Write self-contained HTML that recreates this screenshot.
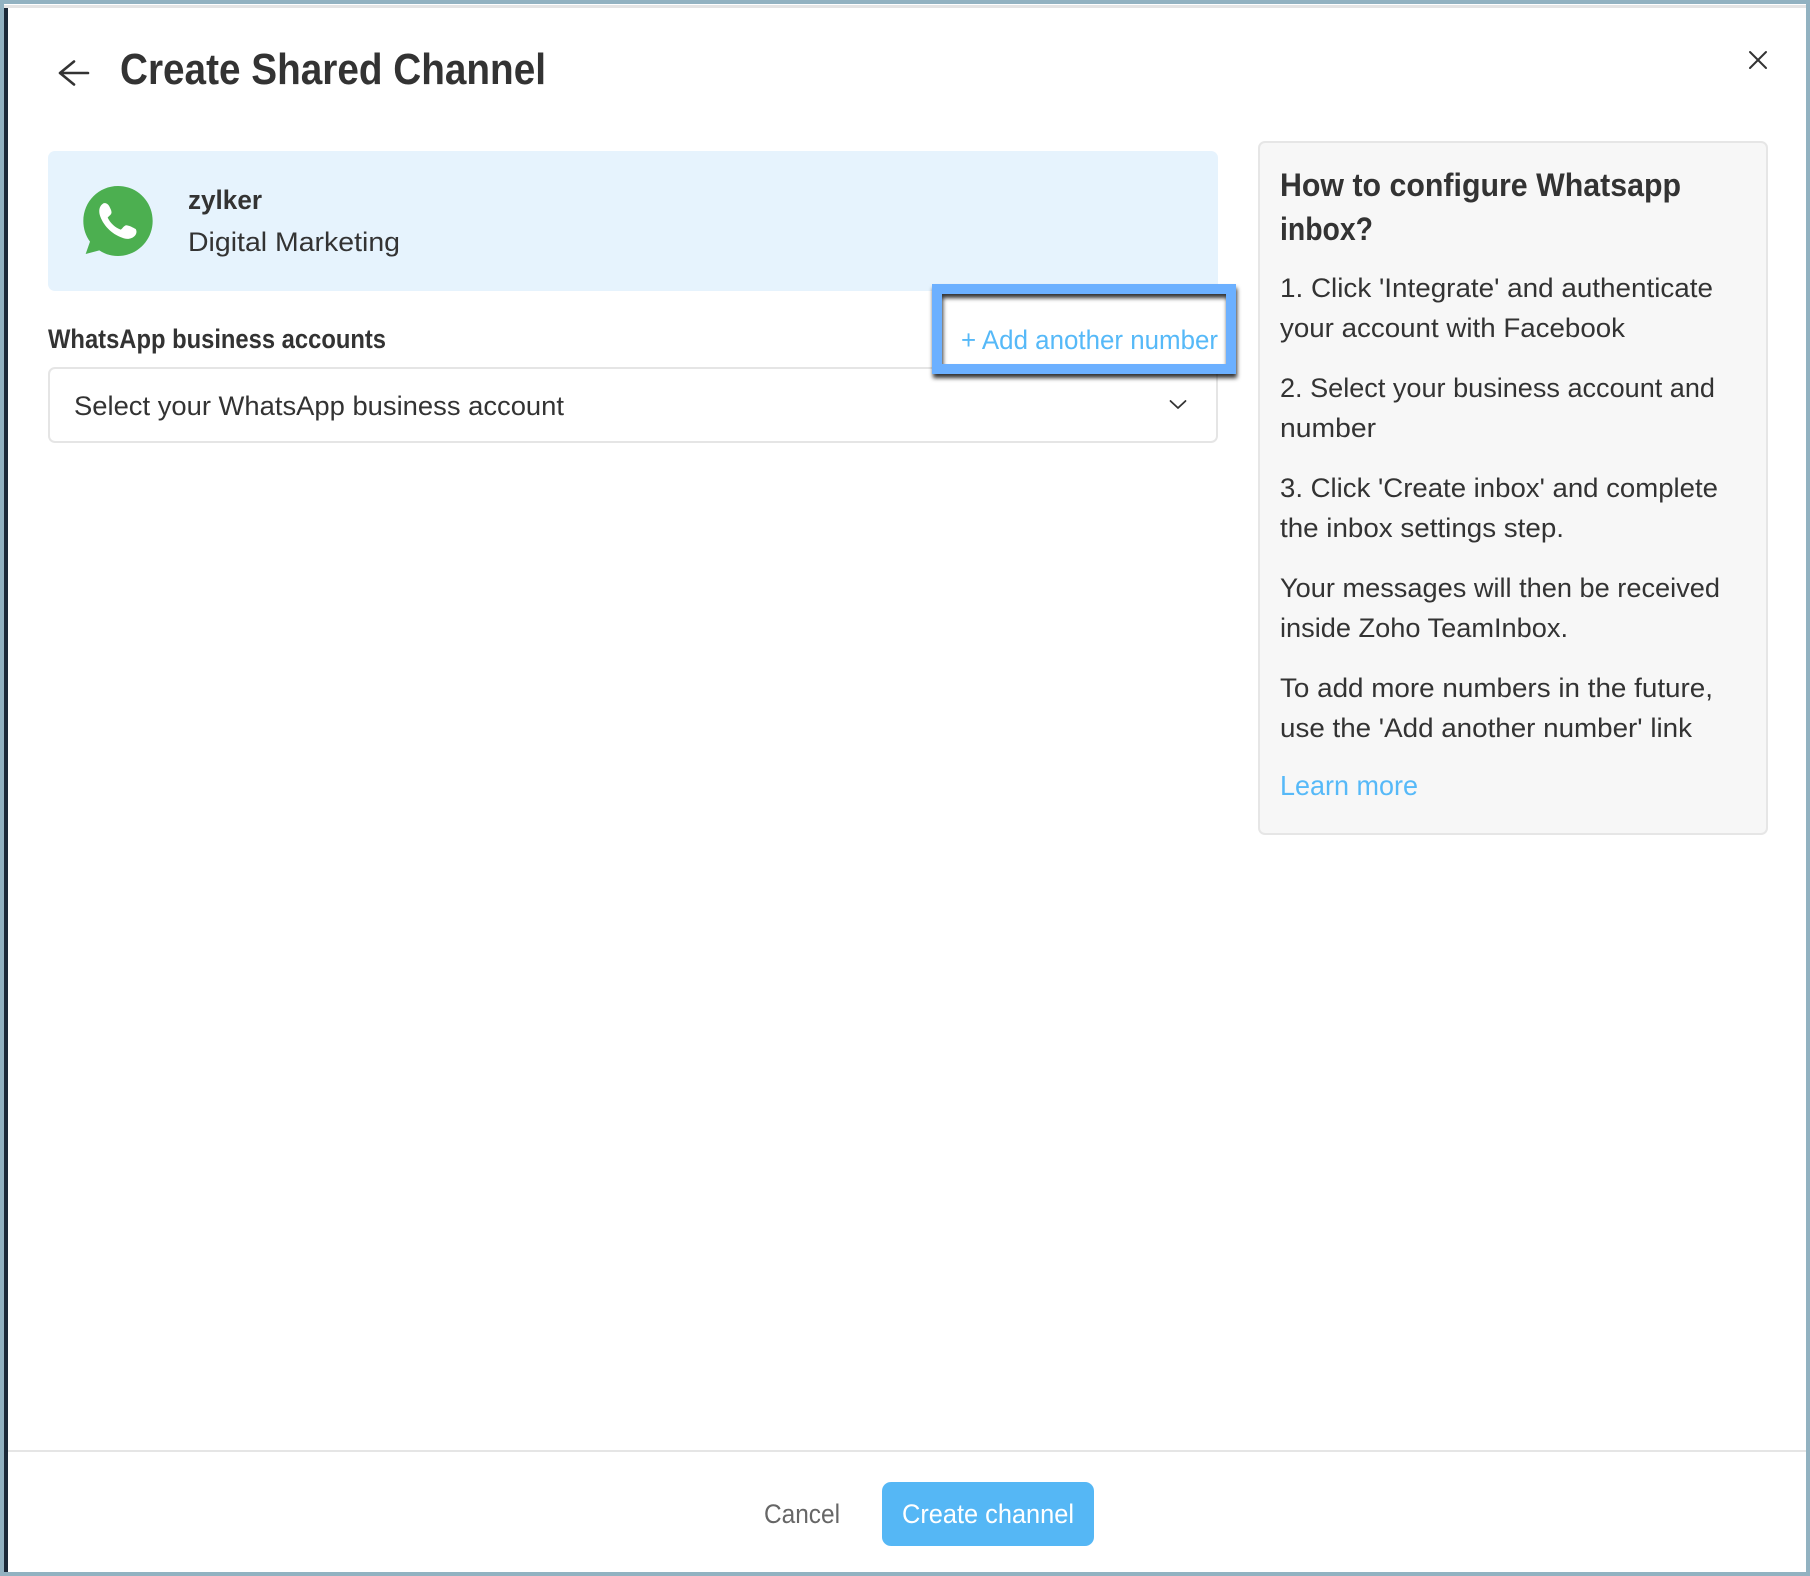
<!DOCTYPE html>
<html lang="en">
<head>
<meta charset="utf-8">
<title>Create Shared Channel</title>
<style>
html,body{margin:0;padding:0;background:#92b2c1;}
body{position:relative;width:1810px;height:1576px;overflow:hidden;}
.abs{position:absolute;box-sizing:border-box;}
svg{position:absolute;left:0;top:0;}
text{font-family:"Liberation Sans",sans-serif;fill:#333;font-size:26px;}
.b{font-weight:bold;}
.link{fill:#56b9f8;}
</style>
</head>
<body>
<div class="abs" style="left:4px;top:4px;width:1802px;height:1568px;background:#fff;"></div>
<div class="abs" style="left:4px;top:5px;width:1802px;height:3px;background:#e4e4e4;"></div>
<div class="abs" style="left:4px;top:8px;width:4px;height:1564px;background:#1c2938;"></div>
<div class="abs" style="left:48px;top:151px;width:1170px;height:140px;background:#e6f3fd;border-radius:7px;"></div>
<div class="abs" style="left:48px;top:367px;width:1170px;height:76px;background:#fff;border:2px solid #e5e5e5;border-radius:7px;"></div>
<div class="abs" style="left:1258px;top:141px;width:510px;height:694px;background:#f7f7f7;border:2px solid #e6e6e6;border-radius:7px;"></div>
<div class="abs" style="left:8px;top:1450px;width:1798px;height:2px;background:#e5e5e5;"></div>
<div class="abs" style="left:882px;top:1482px;width:212px;height:64px;background:#55b7f5;border-radius:9px;"></div>
<div class="abs" style="left:942px;top:294px;width:284px;height:70px;background:#fff;"></div>
<div class="abs" style="left:932px;top:284px;width:304px;height:90px;border:10px solid #6cb0ff;filter:drop-shadow(1px 4px 2px rgba(0,0,0,.8));"></div>

<svg width="1810" height="1576" viewBox="0 0 1810 1576" xmlns="http://www.w3.org/2000/svg">
  <!-- back arrow -->
  <path d="M74 61.5 L60 73 L74 84.5 M60 73 H88" fill="none" stroke="#333" stroke-width="2.6" stroke-linecap="round" stroke-linejoin="round"/>
  <!-- close -->
  <path d="M1750 52 L1766 68 M1766 52 L1750 68" fill="none" stroke="#333" stroke-width="2" stroke-linecap="round"/>
  <!-- chevron -->
  <path d="M1170.5 401 L1178 408 L1185.5 401" fill="none" stroke="#333" stroke-width="1.8" stroke-linecap="round" stroke-linejoin="round"/>
  <!-- whatsapp -->
  <g transform="translate(70 170) scale(.3333)">
    <path d="M144 48 C201 48 248 94 248 153 C248 211 201 258 144 258 C123 258 104 252 88 241 L47 252 L60 215 C47 197 40 176 40 153 C40 94 87 48 144 48 Z" fill="#4caf50"/>
    <path d="M100 100 C108 98 114 102 118 109 C122 117 126 124 124 130 C122 136 116 138 113 143 C121 160 136 173 152 179 C157 176 161 168 167 166 C175 165 188 172 197 177 C201 183 200 191 195 197 C187 206 174 209 162 205 C130 196 102 170 91 140 C85 124 87 108 100 100 Z" fill="#fff"/>
  </g>

  <text class="b" x="120" y="84" style="font-size:44px" textLength="426" lengthAdjust="spacingAndGlyphs">Create Shared Channel</text>
  <text class="b" x="188" y="209" style="font-size:27px" textLength="74" lengthAdjust="spacingAndGlyphs">zylker</text>
  <text x="188" y="251" style="font-size:27px" textLength="212" lengthAdjust="spacingAndGlyphs">Digital Marketing</text>
  <text class="b" x="48" y="348" style="font-size:26.5px" textLength="338" lengthAdjust="spacingAndGlyphs">WhatsApp business accounts</text>
  <text class="link" x="961" y="349" style="font-size:26.5px" textLength="257" lengthAdjust="spacingAndGlyphs">+ Add another number</text>
  <text x="74" y="415" style="font-size:27px" textLength="490" lengthAdjust="spacingAndGlyphs">Select your WhatsApp business account</text>

  <text class="b" x="1280" y="196" style="font-size:32px" textLength="401" lengthAdjust="spacingAndGlyphs">How to configure Whatsapp</text>
  <text class="b" x="1280" y="240" style="font-size:32px" textLength="93" lengthAdjust="spacingAndGlyphs">inbox?</text>

  <text x="1280" y="297" style="font-size:27px" textLength="433" lengthAdjust="spacingAndGlyphs">1. Click 'Integrate' and authenticate</text>
  <text x="1280" y="337" style="font-size:27px" textLength="345" lengthAdjust="spacingAndGlyphs">your account with Facebook</text>
  <text x="1280" y="397" style="font-size:27px" textLength="435" lengthAdjust="spacingAndGlyphs">2. Select your business account and</text>
  <text x="1280" y="437" style="font-size:27px" textLength="96" lengthAdjust="spacingAndGlyphs">number</text>
  <text x="1280" y="497" style="font-size:27px" textLength="438" lengthAdjust="spacingAndGlyphs">3. Click 'Create inbox' and complete</text>
  <text x="1280" y="537" style="font-size:27px" textLength="284" lengthAdjust="spacingAndGlyphs">the inbox settings step.</text>
  <text x="1280" y="597" style="font-size:27px" textLength="440" lengthAdjust="spacingAndGlyphs">Your messages will then be received</text>
  <text x="1280" y="637" style="font-size:27px" textLength="288" lengthAdjust="spacingAndGlyphs">inside Zoho TeamInbox.</text>
  <text x="1280" y="697" style="font-size:27px" textLength="433" lengthAdjust="spacingAndGlyphs">To add more numbers in the future,</text>
  <text x="1280" y="737" style="font-size:27px" textLength="412" lengthAdjust="spacingAndGlyphs">use the 'Add another number' link</text>
  <text class="link" x="1280" y="795" style="font-size:28px" textLength="138" lengthAdjust="spacingAndGlyphs">Learn more</text>

  <text x="764" y="1523" style="fill:#666;font-size:27px" textLength="76" lengthAdjust="spacingAndGlyphs">Cancel</text>
  <text x="902" y="1523" style="fill:#fff;font-size:27px" textLength="172" lengthAdjust="spacingAndGlyphs">Create channel</text>
</svg>
</body>
</html>
